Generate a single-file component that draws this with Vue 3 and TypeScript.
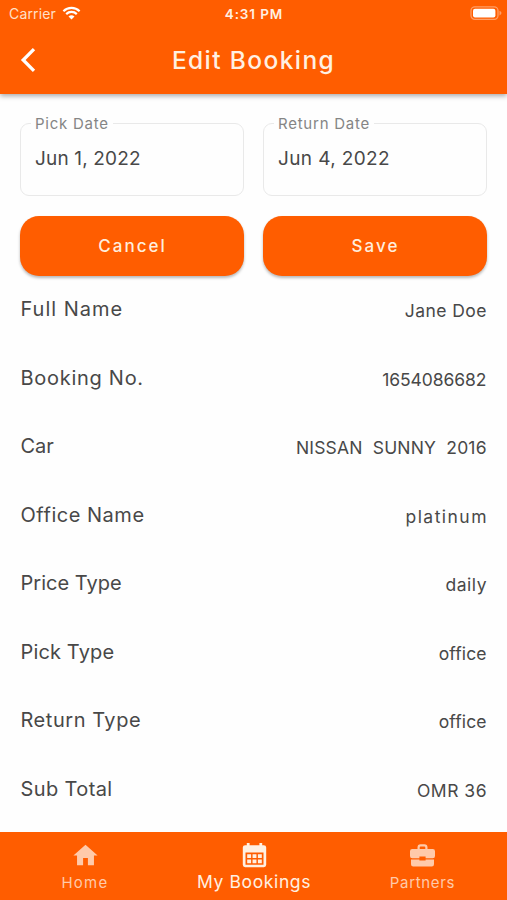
<script setup lang="ts">
interface Field {
  label: string
  value: string
  tracking: number
}

interface Detail {
  label: string
  value: string
  labelTracking: number
  valueTracking: number
}

const fields: Field[] = [
  { label: 'Pick Date', value: 'Jun 1, 2022', tracking: 0.16 },
  { label: 'Return Date', value: 'Jun 4, 2022', tracking: 0.37 },
]

const details: Detail[] = [
  { label: 'Full Name', value: 'Jane Doe', labelTracking: 0.99, valueTracking: 0.45 },
  { label: 'Booking No.', value: '1654086682', labelTracking: 0.72, valueTracking: -0.08 },
  { label: 'Car', value: 'NISSAN\u00a0 SUNNY\u00a0 2016', labelTracking: 0, valueTracking: 0.17 },
  { label: 'Office Name', value: 'platinum', labelTracking: 0.52, valueTracking: 1.46 },
  { label: 'Price Type', value: 'daily', labelTracking: 0.02, valueTracking: 0.5 },
  { label: 'Pick Type', value: 'office', labelTracking: 0.14, valueTracking: 0.12 },
  { label: 'Return Type', value: 'office', labelTracking: 0.54, valueTracking: 0.12 },
  { label: 'Sub Total', value: 'OMR 36', labelTracking: 0.39, valueTracking: 0.5 },
]
</script>

<template>
  <div class="screen">
    <header class="top">
      <div class="status">
        <div class="carrier">
          <span>Carrier</span>
          <svg class="wifi" viewBox="0 0 19 14" width="19" height="14">
            <path d="M1.4 5.2a11.6 11.6 0 0 1 16.2 0" />
            <path d="M4.2 8.1a7.6 7.6 0 0 1 10.6 0" />
            <path class="dot" d="M9.5 13.6 6.5 10.6a4.3 4.3 0 0 1 6 0z" />
          </svg>
        </div>
        <span class="clock">4:31 PM</span>
        <svg class="battery" viewBox="0 0 32 14" width="32" height="14">
          <rect class="shell" x="1" y="0.9" width="27" height="12.4" rx="3.8" />
          <rect class="charge" x="3" y="2.7" width="22.4" height="8.8" rx="2" />
          <path class="nub" d="M29.5 4.8q2 .9 2 2.3t-2 2.3z" />
        </svg>
      </div>
      <div class="bar">
        <button class="back" aria-label="Back">
          <svg viewBox="0 0 16 26" width="16" height="26"><path d="M14 2.2 3.2 13 14 23.8" /></svg>
        </button>
        <h1>Edit Booking</h1>
      </div>
    </header>

    <main>
      <div class="pair">
        <fieldset v-for="f in fields" :key="f.label" class="field">
          <legend>{{ f.label }}</legend>
          <div class="date" :style="{ letterSpacing: f.tracking + 'px' }">{{ f.value }}</div>
        </fieldset>
      </div>
      <div class="pair actions">
        <button class="action">Cancel</button>
        <button class="action">Save</button>
      </div>
      <div class="details">
        <div v-for="d in details" :key="d.label" class="row">
          <span class="label" :style="{ letterSpacing: d.labelTracking + 'px' }">{{ d.label }}</span>
          <span class="value" :style="{ letterSpacing: d.valueTracking + 'px', marginRight: -d.valueTracking + 'px' }">{{ d.value }}</span>
        </div>
      </div>
    </main>

    <nav>
      <a class="tab">
        <svg viewBox="0 0 24 24" width="29" height="29"><path d="M10 20v-6h4v6h5v-8h3L12 3 2 12h3v8z" /></svg>
        <span class="home">Home</span>
      </a>
      <a class="tab active">
        <svg viewBox="0 0 29 29" width="29" height="29">
          <path fill-rule="evenodd" d="M6.8 2h2.8v2.2h9.8V2h2.8v2.2h1.6a2.4 2.4 0 0 1 2.4 2.4v17.2a2.4 2.4 0 0 1-2.4 2.4H5.2a2.4 2.4 0 0 1-2.4-2.4V6.6a2.4 2.4 0 0 1 2.4-2.4h1.6zM5.5 11.6v12.2h18V11.6z" />
          <path d="M7.2 13.2h3.9v3.8H7.2zM12.55 13.2h3.9v3.8h-3.9zM17.9 13.2h3.9v3.8h-3.9zM7.2 18.4h3.9v3.8H7.2zM12.55 18.4h3.9v3.8h-3.9zM17.9 18.4h3.9v3.8h-3.9z" />
        </svg>
        <span>My Bookings</span>
      </a>
      <a class="tab last">
        <svg viewBox="0 0 29 29" width="29" height="29">
          <path class="handle" d="M10.6 8.5V6.4a2 2 0 0 1 2-2h3.800a2 2 0 0 1 2 2v2.100" />
          <path d="M4.200 8h20.600a2.200 2.200 0 0 1 2.200 2.200v4.900a2.200 2.200 0 0 1-2.200 2.200H17.600v-1.900h-6.200v1.900H4.200A2.200 2.200 0 0 1 2 15.100v-4.900A2.200 2.200 0 0 1 4.200 8z" />
          <path d="M3 18.400h8.400v1.200h6.200v-1.200H26v4.800a2.200 2.200 0 0 1-2.200 2.200H5.200A2.200 2.200 0 0 1 3 23.200z" />
        </svg>
        <span class="partners">Partners</span>
      </a>
    </nav>
  </div>
</template>

<style>
body {
  background: #fff;
}
</style>

<style scoped>
.screen {
  height: 900px;
  display: flex;
  flex-direction: column;
  overflow: hidden;
  background: #fefefe;
  color: #484848;
  font-family: Inter, "Liberation Sans", sans-serif;
}
button {
  border: 0;
  padding: 0;
  font-family: inherit;
}
.top {
  height: 94px;
  flex: none;
  background: #ff5d00;
  color: #fff0e2;
  box-shadow: 0 2px 5px rgba(0, 0, 0, 0.34);
}
.status {
  height: 28px;
  display: grid;
  grid-template-columns: 1fr auto 1fr;
  align-items: center;
  padding: 0 5px 0 9px;
}
.carrier {
  display: flex;
  align-items: center;
  gap: 6px;
  font-size: 14px;
  line-height: 16px;
  letter-spacing: 0.15px;
  color: #ffe0c8;
}
.carrier span {
  padding-bottom: 1px;
}
.wifi {
  fill: none;
  stroke: #fff;
  stroke-width: 2.2;
  position: relative;
  top: -1px;
}
.wifi .dot {
  fill: #fff;
  stroke: none;
}
.clock {
  margin-left: -3px;
  font-size: 13.5px;
  font-weight: 600;
  letter-spacing: 0.9px;
}
.battery {
  justify-self: end;
  position: relative;
  top: -1px;
}
.shell {
  fill: none;
  stroke: #ff9e66;
  stroke-width: 1.3;
}
.charge {
  fill: #fff;
}
.nub {
  fill: #ff9e66;
}
.bar {
  height: 64px;
  display: grid;
  grid-template-columns: 60px 1fr 60px;
  align-items: center;
}
.back {
  margin-left: 20px;
  width: 16px;
  height: 26px;
  background: none;
}
.back svg {
  display: block;
  fill: none;
  stroke: #fff;
  stroke-width: 3.3;
}
h1 {
  margin: 0;
  text-align: center;
  font-size: 24.5px;
  font-weight: 500;
  line-height: 30px;
  letter-spacing: 1.4px;
}
main {
  flex: 1;
  min-height: 0;
  padding: 21px 20px 0;
}
.pair {
  display: grid;
  grid-template-columns: 1fr 1fr;
  gap: 19px;
}
.field {
  box-sizing: border-box;
  min-width: 0;
  height: 81px;
  margin: 0;
  padding: 0 10px;
  border: 1.5px solid #e9e9e9;
  border-radius: 9px;
}
legend {
  padding: 0 4px;
  font-size: 15px;
  line-height: 17px;
  letter-spacing: 0.76px;
  color: #858585;
}
.date {
  padding: 15px 4px 0;
  font-size: 19px;
  line-height: 24px;
}
.actions {
  margin-top: 20px;
}
.action {
  height: 60px;
  border-radius: 19px;
  background: #ff5d00;
  color: #ffeedd;
  font-size: 17px;
  font-weight: 500;
  line-height: 22px;
  letter-spacing: 2px;
  text-indent: 1px;
  box-shadow: 0 2px 3px rgba(0, 0, 0, 0.28);
}
.details {
  margin-top: -1px;
}
.row {
  height: 68.5px;
  display: flex;
  align-items: center;
  justify-content: space-between;
}
.label {
  padding-left: 0.5px;
  font-size: 20px;
}
.value {
  padding: 3px 0.5px 0 0;
  font-size: 17.5px;
}
nav {
  height: 68.5px;
  flex: none;
  display: grid;
  grid-template-columns: repeat(3, 1fr);
  background: #ff5d00;
}
.tab {
  display: flex;
  flex-direction: column;
  align-items: center;
  padding: 9.5px 0 0 1px;
  color: #ffcaaa;
  font-size: 15px;
}
.tab.last {
  padding-left: 0;
}
.tab svg {
  fill: currentColor;
}
.tab svg .handle {
  fill: none;
  stroke: currentColor;
  stroke-width: 2.2;
}
.tab span {
  line-height: 26px;
}
.home {
  letter-spacing: 1.3px;
}
.partners {
  letter-spacing: 0.68px;
}
.tab.active {
  color: #fff0e2;
  font-size: 17.5px;
  letter-spacing: 0.63px;
}
.tab.active span {
  line-height: 24px;
}
</style>
